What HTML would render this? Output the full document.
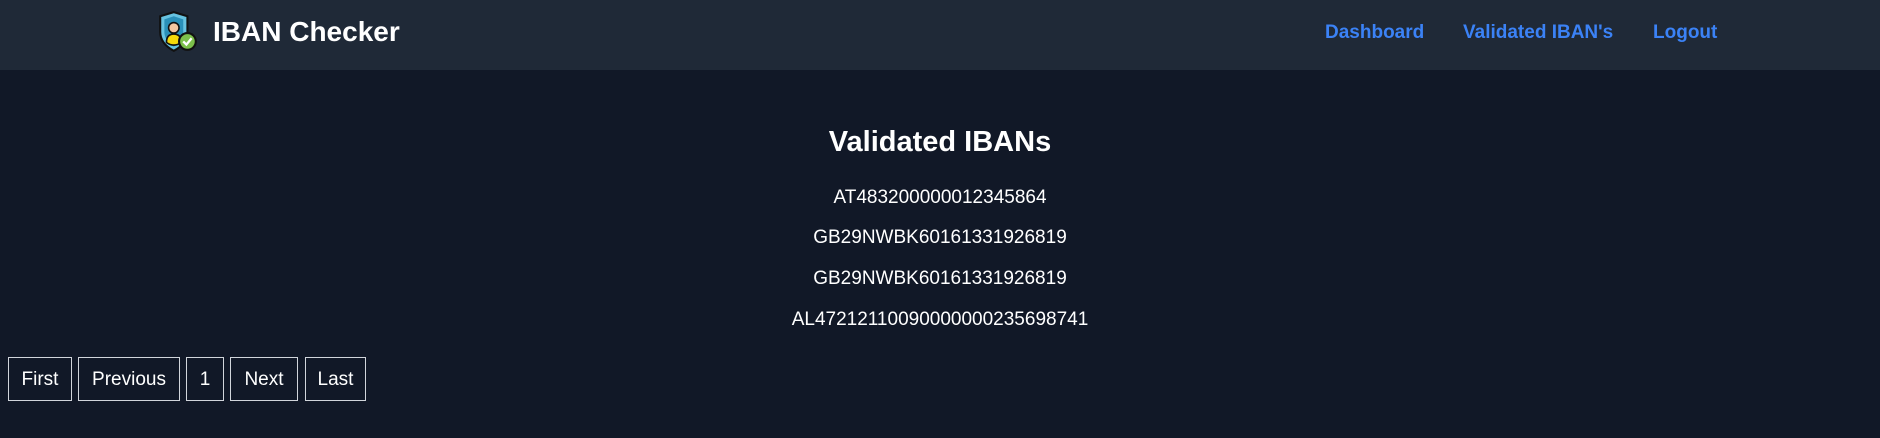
<!DOCTYPE html>
<html><head><meta charset="utf-8"><style>
*{margin:0;padding:0;box-sizing:border-box}
body{width:1880px;height:438px;background:#111827;font-family:"Liberation Sans",sans-serif;color:#fff;position:relative;overflow:hidden}
.hdr{position:absolute;left:0;top:0;width:1880px;height:70px;background:#1f2937}
.title{position:absolute;left:213px;top:16px;font-size:28px;font-weight:bold;white-space:nowrap}
.nav{position:absolute;top:22px;font-size:19px;font-weight:bold;color:#3b82f6;white-space:nowrap}
h1{position:absolute;left:0;width:1880px;text-align:center;top:126px;font-size:29px;font-weight:bold}
.ib{position:absolute;left:0;width:1880px;text-align:center;font-size:19px}
.pg{position:absolute;top:357px;height:44px;border:1px solid #d1d5db;font-size:19px;line-height:44px;text-align:center}
</style></head><body>
<div class="hdr">
<svg style="position:absolute;left:156px;top:11px" width="44" height="42" viewBox="0 0 42 40">
<path d="M4 5 L17 1 L30 5 L30 20 Q30 31 17 38 Q4 31 4 20 Z" fill="#67c3e0" stroke="#111" stroke-width="2"/>
<path d="M8 8 L17 5 L26 8 L26 20 Q26 28 17 34 Q8 28 8 20 Z" fill="#2a90b8"/>
<circle cx="17" cy="16" r="5" fill="#f4c7a1" stroke="#111" stroke-width="1.5"/>
<path d="M10 30 Q10 22 17 22 Q24 22 24 30 Q17 35 10 30Z" fill="#f5d90a" stroke="#111" stroke-width="1.5"/>
<circle cx="30" cy="29" r="8" fill="#7cc04b" stroke="#111" stroke-width="2"/>
<path d="M26 29 L29 32 L34 26" fill="none" stroke="#fff" stroke-width="2.2"/>
</svg>
<div class="title">IBAN Checker</div>
<div class="nav" style="left:1325px">Dashboard</div>
<div class="nav" style="left:1463px">Validated IBAN's</div>
<div class="nav" style="left:1653px">Logout</div>
</div>
<h1>Validated IBANs</h1>
<div class="ib" style="top:187px">AT483200000012345864</div>
<div class="ib" style="top:227px">GB29NWBK60161331926819</div>
<div class="ib" style="top:268px">GB29NWBK60161331926819</div>
<div class="ib" style="top:309px">AL47212110090000000235698741</div>
<div class="pg" style="left:8px;width:64px">First</div>
<div class="pg" style="left:78px;width:102px">Previous</div>
<div class="pg" style="left:186px;width:38px">1</div>
<div class="pg" style="left:230px;width:68px">Next</div>
<div class="pg" style="left:305px;width:61px">Last</div>
</body></html>
